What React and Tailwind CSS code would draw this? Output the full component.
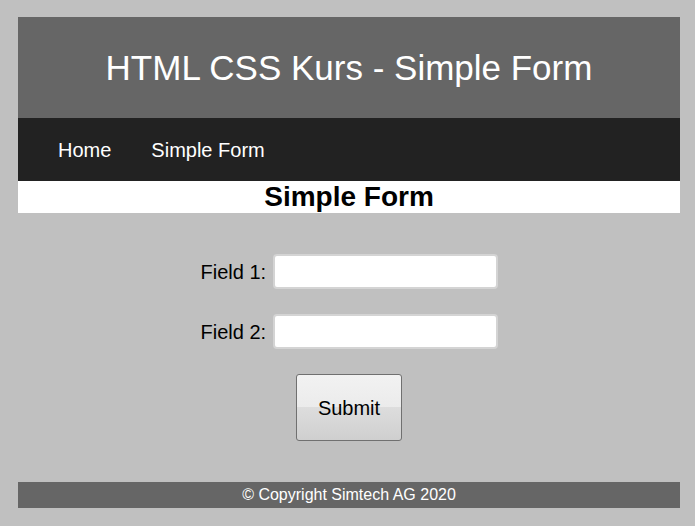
export default function App() {
  return (
    <div className="min-h-[526px] bg-[#c0c0c0] pt-[17px] pb-[18px] font-['Liberation_Sans',Arial,sans-serif]">
      <div className="ml-[18px] w-[662px]">
        <header className="h-[101px] bg-[#666666] flex items-center justify-center">
          <h1 className="text-[35px] leading-none text-white font-normal m-0">HTML CSS Kurs - Simple Form</h1>
        </header>
        <nav className="h-[63px] bg-[#222222] flex items-center pl-[40px] gap-[40px] text-white text-[20px]">
          <span>Home</span>
          <span>Simple Form</span>
        </nav>
        <h2 className="bg-white h-[32px] flex items-center justify-center text-[28px] font-bold text-black leading-none">Simple Form</h2>
        <form className="flex flex-col items-center pt-[41px]" onSubmit={(e) => e.preventDefault()}>
          <div className="flex items-center h-[35px]">
            <label className="w-[65px] whitespace-nowrap text-[20px] text-black mr-[7px]">Field 1:</label>
            <input type="text" className="w-[225px] h-[35px] bg-white border-2 border-[#d4d4d4] rounded-[4px] outline-none" />
          </div>
          <div className="flex items-center h-[35px] mt-[25px]">
            <label className="w-[65px] whitespace-nowrap text-[20px] text-black mr-[7px]">Field 2:</label>
            <input type="text" className="w-[225px] h-[35px] bg-white border-2 border-[#d4d4d4] rounded-[4px] outline-none" />
          </div>
          <button type="submit" className="mt-[25px] w-[106px] h-[67px] border border-[#707070] rounded-[3px] text-[20px] text-black bg-[linear-gradient(#f2f2f2_0%,#ebebeb_50%,#dddddd_50%,#cfcfcf_100%)]">Submit</button>
        </form>
        <footer className="mt-[41px] h-[26px] bg-[#666666] flex items-center justify-center text-white text-[16px]">© Copyright Simtech AG 2020</footer>
      </div>
    </div>
  );
}
